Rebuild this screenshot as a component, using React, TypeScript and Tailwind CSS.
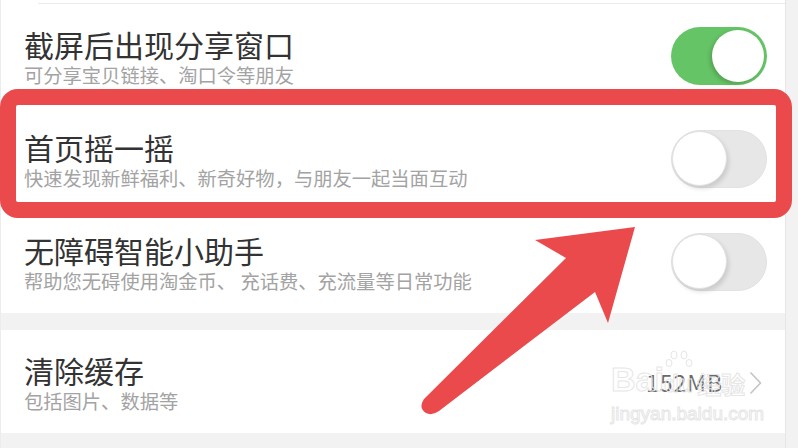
import React from "react";

const font = { fontFamily: '"Noto Sans CJK SC", "Noto Sans", sans-serif' };

function Toggle({ on }: { on: boolean }) {
  if (on) {
    return (
      <div className="flex h-[58px] w-[96px] shrink-0 items-center justify-end rounded-full bg-[#65c466] pr-[3px]">
        <div className="h-[52px] w-[52px] rounded-full bg-white shadow-[-2px_2px_4px_rgba(0,0,0,0.18)]" />
      </div>
    );
  }
  return (
    <div className="flex h-[58px] w-[96px] shrink-0 items-center rounded-full border border-[#e2e2e2] bg-[#e7e7e7]">
      <div className="h-[55px] w-[55px] rounded-full border border-[#e0e0e0] bg-white shadow-[2px_3px_4px_rgba(0,0,0,0.12)]" />
    </div>
  );
}

function Row({
  title,
  sub,
  right,
}: {
  title: string;
  sub: string;
  right: React.ReactNode;
}) {
  return (
    <div className="flex h-[103px] items-center justify-between pl-[23px] pr-[18px]">
      <div className="flex flex-col pt-[3px]">
        <div className="text-[30px] leading-[36px] text-[#333]">{title}</div>
        <div className="text-[19.3px] leading-[27px] text-[#a3a3a3]">{sub}</div>
      </div>
      {right}
    </div>
  );
}

export default function App() {
  return (
    <div className="relative flex h-[448px] w-[798px] overflow-hidden bg-[#f2f2f2]" style={font}>
      <div className="flex w-[786px] flex-col border-l border-[#ececec] border-r border-r-[#e6e6e6]">
        <div className="h-[4px] bg-white">
          <div className="ml-[37px] mt-[3px] h-px bg-[#ebebeb]" />
        </div>
        <div className="bg-white">
          <Row title="截屏后出现分享窗口" sub="可分享宝贝链接、淘口令等朋友" right={<Toggle on />} />
          <Row
            title="首页摇一摇"
            sub="快速发现新鲜福利、新奇好物，与朋友一起当面互动"
            right={<Toggle on={false} />}
          />
          <Row
            title="无障碍智能小助手"
            sub="帮助您无碍使用淘金币、 充话费、充流量等日常功能"
            right={<Toggle on={false} />}
          />
        </div>
        <div className="h-[17px] bg-[#f2f2f2]" />
        <div className="bg-white">
          <Row
            title="清除缓存"
            sub="包括图片、数据等"
            right={
              <div className="flex items-center gap-[26px] pr-[5px] pt-[2px]">
                <span className="text-[23px] tracking-[1px] text-[#6a6a6a]">152MB</span>
                <svg width="13" height="24" viewBox="0 0 13 24" fill="none">
                  <path d="M1.5 1.5 L11.5 12 L1.5 22.5" stroke="#c4c4c4" strokeWidth="1.6" />
                </svg>
              </div>
            }
          />
        </div>
        <div className="flex-1 bg-[#f2f2f2]" />
      </div>

      {/* highlight box */}
      <div className="pointer-events-none absolute left-0 top-[89px] h-[129px] w-[792px] rounded-[18px] border-[16px] border-[#ea4a4c]" />

      {/* watermark */}
      <div className="pointer-events-none absolute left-[611px] top-[362px] flex flex-col items-start text-transparent [-webkit-text-stroke:1px_#e6e6e6]">
        <div className="flex items-end font-bold leading-none" style={{ fontFamily: '"Liberation Sans", sans-serif' }}>
          <span className="text-[34px]">Bai</span>
          <span className="relative text-[24px]">
            <svg className="absolute -top-[22px] left-[1px]" width="28" height="22" viewBox="0 0 28 22" fill="none" stroke="#e6e6e6">
              <ellipse cx="9" cy="5" rx="3" ry="4" />
              <ellipse cx="19" cy="5" rx="3" ry="4" />
              <ellipse cx="4" cy="13" rx="3" ry="3.5" />
              <ellipse cx="24" cy="13" rx="3" ry="3.5" />
            </svg>
            du
          </span>
          <span className="ml-[4px] text-[24px]" style={font}>经验</span>
        </div>
        <div className="mt-[8px] text-[19px] leading-none" style={{ fontFamily: '"Liberation Sans", sans-serif' }}>
          jingyan.baidu.com
        </div>
      </div>

      {/* arrow */}
      <svg className="pointer-events-none absolute left-0 top-0" width="798" height="448" viewBox="0 0 798 448">
        <path
          d="M635 227 L535 240 L566 258 L424 399 Q418 408 426 413 Q432 416 439 411 L595 292 L608 323 Z"
          fill="#ea4a4c"
        />
      </svg>
    </div>
  );
}
